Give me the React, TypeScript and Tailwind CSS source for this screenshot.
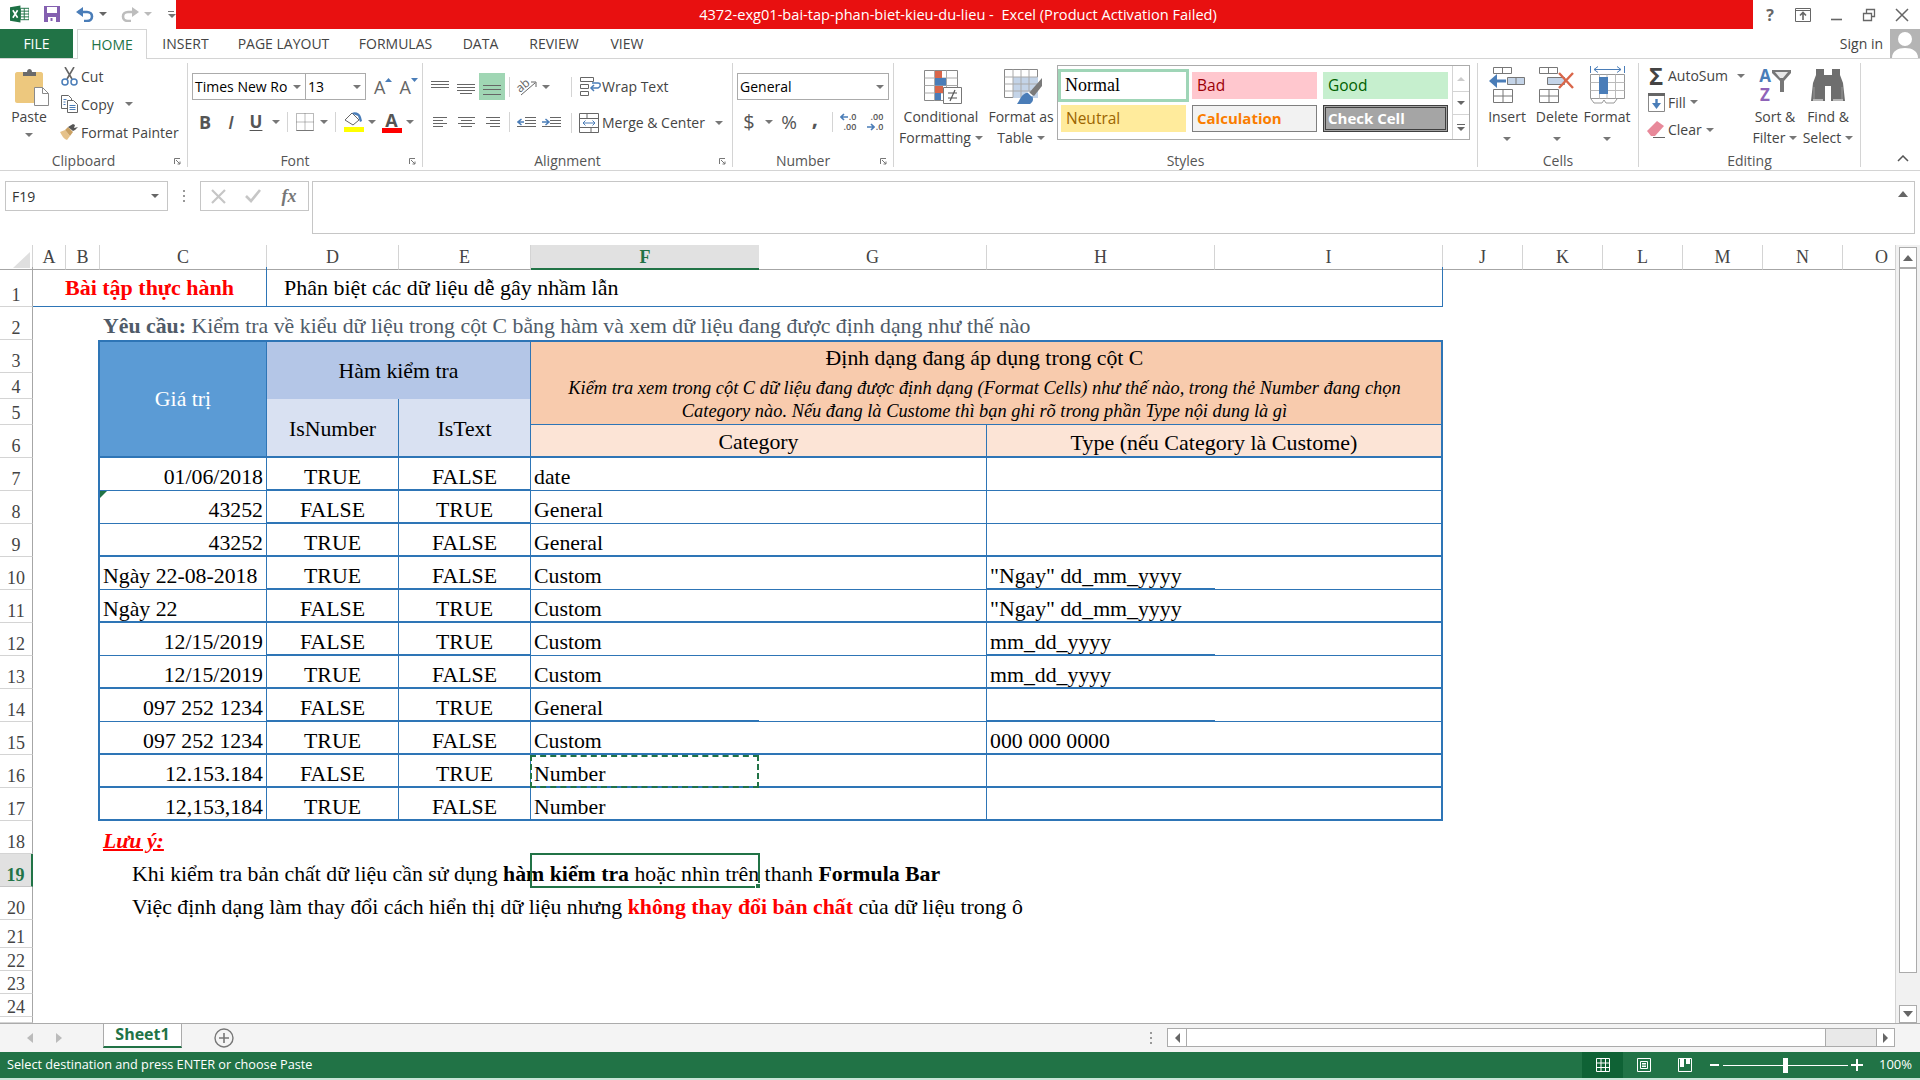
import type { ReactNode } from 'react';

const COLS =
  'grid grid-cols-[33px_33px_34px_167px_132px_132px_228px_228px_228px_228px_80px_80px_80px_80px_80px_52px]';
const BLUE = 'border-[#2e75b6]';
const SERIF = "[font-family:'Liberation_Serif','Times_New_Roman',serif]";

function Caret({ color = '#777' }: { color?: string }) {
  return (
    <svg width="8" height="4" viewBox="0 0 8 4" className="shrink-0">
      <path d="M0 0h8L4 4z" fill={color} />
    </svg>
  );
}

function Sep({ h = 'h-[20px]' }: { h?: string }) {
  return <div className={`w-px ${h} bg-[#d4d4d4]`} />;
}

// horizontal lines used by the alignment and indent buttons
function Lines({ w, h, rows }: { w: number; h: number; rows: number[][] }) {
  return (
    <svg width={w} height={h} viewBox={`0 0 ${w} ${h}`}>
      {rows.map((r, i) => (
        <path key={i} d={`M${r[0]} ${r[2]}.5H${r[1]}`} stroke="#666" />
      ))}
    </svg>
  );
}

function ExcelLogo() {
  return (
    <svg width="20" height="18" viewBox="0 0 20 18">
      <path d="M0 2 11 0v18L0 16z" fill="#1e7145" />
      <path d="M11 3h9v12h-9z" fill="#fff" stroke="#1e7145" />
      <path d="M11 6h9M11 9h9M11 12h9M15 3v12" stroke="#1e7145" />
      <path d="M3 5l5 8M8 5l-5 8" stroke="#fff" strokeWidth="1.7" />
    </svg>
  );
}

function SaveIcon() {
  return (
    <svg width="16" height="16" viewBox="0 0 16 16">
      <path d="M0 0h16v16H0z" fill="#8460b0" />
      <path d="M3 1h10v6H3z" fill="#fff" />
      <path d="M4 11h8v5H4z" fill="#fff" />
      <path d="M6.500 12h2v3h-2z" fill="#8460b0" />
    </svg>
  );
}

function UndoIcon({ color, flip }: { color: string; flip?: boolean }) {
  return (
    <svg width="18" height="15" viewBox="0 0 18 15" className={flip ? '-scale-x-100' : ''}>
      <path d="M2 5h9c3 0 5 2 5 4.500S14 14 11 14H8" fill="none" stroke={color} strokeWidth="2.600" />
      <path d="M7 0v10L0 5z" fill={color} />
    </svg>
  );
}

function WinIcon({ kind }: { kind: string }) {
  const s = '#666';
  return (
    <svg width="16" height="16" viewBox="0 0 16 16" fill="none" stroke={s}>
      {kind === 'display' && (
        <>
          <path d="M.5 1.500h15v13H.5zM.5 3.500h15" />
          <path d="M8 13V6M5 8.500 8 5.500l3 3" strokeWidth="1.600" />
        </>
      )}
      {kind === 'min' && <path d="M3 12.500h11" strokeWidth="1.600" />}
      {kind === 'restore' && <path d="M2.500 6.500h8v7h-8zM5.500 6.500v-4h8v7h-3" strokeWidth="1.300" />}
      {kind === 'close' && <path d="M2 2l12 12M14 2 2 14" strokeWidth="1.500" />}
    </svg>
  );
}

function PasteIcon() {
  return (
    <svg width="34" height="38" viewBox="0 0 34 38">
      <path d="M0 6c0-1 1-2 2-2h24c1 0 2 1 2 2v29H2c-1 0-2-1-2-2z" fill="#edc87e" />
      <path d="M8 4h4c0-4 5-4 5 0h4v4H8z" fill="#6a6a6a" />
      <path d="M19.500 19.500h8l6 6v12h-14z" fill="#fff" stroke="#8a8a8a" />
      <path d="M27.500 19.500v6h6" fill="none" stroke="#8a8a8a" />
    </svg>
  );
}

function CutIcon() {
  return (
    <svg width="17" height="19" viewBox="0 0 17 19" fill="none">
      <path d="M4 0l7 12M13 0 6 12" stroke="#666" strokeWidth="1.600" />
      <circle cx="4" cy="15" r="3" stroke="#4a7db8" strokeWidth="1.500" />
      <circle cx="13" cy="15" r="3" stroke="#4a7db8" strokeWidth="1.500" />
    </svg>
  );
}

function CopyIcon() {
  return (
    <svg width="17" height="18" viewBox="0 0 17 18" fill="none" stroke="#666">
      <path d="M.5.500h7l3 3v10h-10z" fill="#fff" />
      <path d="M6.500 5.500h6l4 4v8h-10z" fill="#fff" />
      <path d="M8.500 10.500h6M8.500 12.500h6M8.500 14.500h6" stroke="#4a7db8" />
      <path d="M2.500 4.500h3M2.500 7h2M2.500 9.500h2" stroke="#4a7db8" />
    </svg>
  );
}

function PainterIcon() {
  return (
    <svg width="18" height="16" viewBox="0 0 18 16">
      <path d="M0 8l5-2 5 6-3 4c-3-1-5-4-7-8z" fill="#e6c28a" />
      <path d="M5 6l3-3 5 5-3 4z" fill="#c9a062" />
      <path d="M8 3l5-3 2 1-1 3 4-1-3 3-2 1z" fill="#555" />
    </svg>
  );
}

function FillIcon() {
  return (
    <div className="flex flex-col items-center gap-[1px]">
      <svg width="19" height="14" viewBox="0 0 19 14" fill="none">
        <path d="M1 8l7-7 7 7-6 5z" fill="#fff" stroke="#666" />
        <path d="M8 1c3-2 8 0 9 4l1 4-2 1-2-6-5-2z" fill="#4a7db8" />
      </svg>
      <div className="w-[20px] h-[5px] bg-[#ffff00]" />
    </div>
  );
}

function OrientIcon() {
  return (
    <svg width="22" height="18" viewBox="0 0 22 18" fill="none" className="overflow-visible">
      <text x="1" y="11" fontSize="12" fill="#666" fontFamily="Open Sans" transform="rotate(-40 8 9)">
        ab
      </text>
      <path d="M5 17 19 5" stroke="#666" />
      <path d="M15 4h5v5" stroke="#666" />
    </svg>
  );
}

function IndentIcon({ right }: { right?: boolean }) {
  return (
    <svg width="19" height="11" viewBox="0 0 19 11" fill="none">
      <path d="M8 .5h11M8 3.500h11M8 6.500h11M0 9.500h19" stroke="#666" />
      {right ? (
        <path d="M0 5h6M3.500 2 7 5 3.500 8" stroke="#4a7db8" strokeWidth="1.500" />
      ) : (
        <path d="M7 5H1M4.500 2 1 5l3.500 3" stroke="#4a7db8" strokeWidth="1.500" />
      )}
    </svg>
  );
}

function WrapIcon() {
  return (
    <svg width="21" height="19" viewBox="0 0 21 19" fill="none">
      <path d="M.5.500h13v4H.5zM.5 7.500h8v4h-8zM.5 14.500h8v4h-8z" stroke="#666" />
      <path d="M11 11h7c3-1 3-5 0-5h-6" stroke="#4a7db8" strokeWidth="1.500" />
      <path d="M14 8l-3 3 3 3" stroke="#4a7db8" strokeWidth="1.500" />
    </svg>
  );
}

function MergeIcon() {
  return (
    <svg width="20" height="20" viewBox="0 0 20 20" fill="none">
      <path d="M.5.500h19v19H.5zM.5 5.500h19M.5 14.500h19M8 .5v5M12 14.500v5" stroke="#666" />
      <path d="M4 10h12M6.500 7.500 4 10l2.500 2.500M13.500 7.500 16 10l-2.500 2.500" stroke="#4a7db8" />
    </svg>
  );
}

function CondIcon() {
  return (
    <svg width="38" height="34" viewBox="0 0 38 34" fill="none" className="mt-[4px] ml-[3px]">
      <path d="M.5.500h33v30H.5z" stroke="#888" />
      <path d="M.5 8h33M.5 15.500h33M.5 23h33M10.500.5v30M22.500.5v30" stroke="#aaa" />
      <path d="M11 1h7v7h-7zM11 16h8v7h-8z" fill="#d9664a" />
      <path d="M11 8h11v7.500H11z" fill="#4a7db8" />
      <path d="M11 23h6v7h-6z" fill="#4a7db8" />
      <path d="M19.500 17.500h18v16h-18z" fill="#fff" stroke="#777" />
      <path d="M24 23h9M24 28h9M31 20l-5 11" stroke="#555" strokeWidth="1.200" />
    </svg>
  );
}

function TableIcon() {
  return (
    <svg width="38" height="35" viewBox="0 0 38 35" fill="none" className="mt-[4px] ml-[4px]">
      <path d="M.5.500h33v28H.5z" stroke="#888" />
      <path d="M9 8h25v21H9z" fill="#c4d4e8" />
      <path d="M.5 8h33M.5 15h33M.5 22h33M9 .5v28M17 .5v28M25 .5v28" stroke="#aaa" />
      <path d="M22 24c-5 2-6 7-9 11h13c3-2 4-5 2-8l-3-3z" fill="#4a7db8" />
      <path d="M25 24 38 9v8l-8 10z" fill="#7a7a7a" />
      <path d="M24 23l4 4" stroke="#fff" strokeWidth="1.500" />
    </svg>
  );
}

function InsertIcon() {
  return (
    <svg width="36" height="36" viewBox="0 0 36 36" fill="none">
      <path d="M4.500.5h18v6h-18zM13.500.5v6M4.500 22.500h19v13h-19zM4.500 29h19M14 22.500v13" stroke="#777" />
      <path d="M18.500 10.500h17v7h-17zM27 10.500v7" fill="#c4d4e8" stroke="#777" />
      <path d="M17 14H3" stroke="#4a7db8" strokeWidth="3" />
      <path d="M8 7 0 14l8 7z" fill="#4a7db8" />
    </svg>
  );
}

function DeleteIcon() {
  return (
    <svg width="36" height="36" viewBox="0 0 36 36" fill="none">
      <path d="M.5.500h18v6H.5zM9.500.5v6M.5 22.500h19v13H.5zM.5 29h19M10 22.500v13" stroke="#777" />
      <path d="M8.500 10.500h17v7h-17z" fill="#c4d4e8" stroke="#777" />
      <path d="M20 6l14 15M34 6 20 21" stroke="#d9664a" strokeWidth="2.400" />
    </svg>
  );
}

function FormatIcon() {
  return (
    <svg width="35" height="39" viewBox="0 0 35 39" fill="none">
      <path d="M.5 1v7M34.500 1v7" stroke="#4a7db8" />
      <path d="M4 4.500h27M8 1.500 4 4.500l4 3M27 1.500l4 3-4 3" stroke="#4a7db8" />
      <path d="M.5 9.500h34v24H.5z" stroke="#999" />
      <path d="M.5 17.500h34M.5 25.500h34M9.500 9.500v24M17 9.500v24M25.500 9.500v24" stroke="#bbb" />
      <path d="M9 12h9v17H9z" fill="#4a7db8" />
      <path d="M1 34l3 4h8l2-3 2 3h8l3-4" stroke="#999" />
    </svg>
  );
}

function FillDownIcon() {
  return (
    <svg width="17" height="19" viewBox="0 0 17 19" fill="none">
      <path d="M.5.500h16v18H.5z" stroke="#888" />
      <path d="M0 0h17v3H0z" fill="#666" />
      <path d="M8.500 6v8" stroke="#4a7db8" strokeWidth="2.400" />
      <path d="M4 10l4.500 6 4.500-6z" fill="#4a7db8" />
    </svg>
  );
}

function EraserIcon() {
  return (
    <svg width="18" height="18" viewBox="0 0 18 18">
      <path d="M0 10 10 0l7 5-9 10H4z" fill="#e8899a" />
      <path d="M6 16h12v1H6z" fill="#666" />
    </svg>
  );
}

function FunnelIcon() {
  return (
    <svg width="19" height="22" viewBox="0 0 19 22">
      <path d="M0 0h19v3l-7 8v11H8V11L0 3z" fill="#777" />
      <path d="M3 2h13l-5 6H8z" fill="#e8e8e8" />
    </svg>
  );
}

function BinocularsIcon() {
  return (
    <svg width="34" height="32" viewBox="0 0 34 32">
      <path d="M5 0h8v6h8V0h8v6l3 8 2 18H20V17h-6v15H0l2-18 3-8z" fill="#6e6e6e" />
      <path d="M2 31h10M22 31h10" stroke="#fff" />
      <path d="M3 18v12M31 18v12" stroke="#999" />
    </svg>
  );
}

function Launcher() {
  return (
    <svg width="7" height="7" viewBox="0 0 7 7" fill="none" stroke="#777" className="absolute right-[6px] bottom-[2px]">
      <path d="M.5 6V.5H6M2 2l4 4M6 3.500V6H3.500" />
    </svg>
  );
}

function Group({ w, label, launcher, children }: { w: string; label: string; launcher?: boolean; children: ReactNode }) {
  return (
    <div className={`${w} h-[104px] shrink-0 flex flex-col border-r border-[#d4d4d4] relative`}>
      <div className="h-[90px] flex">{children}</div>
      <div className={`h-[14px] flex items-center justify-center text-[14px] text-[#555] ${launcher ? 'pr-[20px]' : ''}`}>{label}</div>
      {launcher && <Launcher />}
    </div>
  );
}

function BigButton({ w, icon, one, two, caretOnly }: { w: string; icon: ReactNode; one: string; two?: string; caretOnly?: boolean }) {
  return (
    <div className={`${w} flex flex-col items-center text-[14px] text-[#444]`}>
      <div className="h-[43px] flex items-center justify-center">{icon}</div>
      <div className="h-[21px] leading-[21px] whitespace-nowrap">{one}</div>
      {caretOnly ? (
        <div className="h-[15px] mt-[4px] flex items-center">
          <Caret />
        </div>
      ) : (
        <div className="h-[21px] leading-[21px] flex items-center gap-[4px] whitespace-nowrap">
          {two}
          <Caret />
        </div>
      )}
    </div>
  );
}

function SmallRow({ h, icon, text, caret }: { h: string; icon: ReactNode; text: string; caret?: string }) {
  return (
    <div className={`${h} flex items-center text-[14px] text-[#444] whitespace-nowrap`}>
      <div className="w-[22px] flex justify-center">{icon}</div>
      <span className="ml-[1px]">{text}</span>
      {caret && (
        <span className={caret}>
          <Caret />
        </span>
      )}
    </div>
  );
}

function Cell({ w, children }: { w: string; children?: ReactNode }) {
  return <div className={`${w} h-full flex items-center justify-center shrink-0`}>{children}</div>;
}

function TitleBar() {
  return (
    <div className="h-[29px] flex">
      <div className="w-[176px] flex items-center pl-[10px] pb-[1px]">
        <ExcelLogo />
        <div className="ml-[15px]">
          <SaveIcon />
        </div>
        <div className="ml-[16px]">
          <UndoIcon color="#4a7db8" />
        </div>
        <div className="ml-[5px]">
          <Caret color="#666" />
        </div>
        <div className="ml-[14px]">
          <UndoIcon color="#bdbdbd" flip />
        </div>
        <div className="ml-[5px]">
          <Caret color="#bbb" />
        </div>
        <div className="ml-[16px] flex flex-col gap-[2px]">
          <div className="w-[6px] h-px bg-[#777]" />
          <Caret color="#777" />
        </div>
      </div>
      <div className="flex-1 bg-[#e81010] flex items-center justify-center text-white text-[14.6px] whitespace-pre pr-[13px]">
        4372-exg01-bai-tap-phan-biet-kieu-du-lieu -  Excel (Product Activation Failed)
      </div>
      <div className="w-[167px] flex items-center pl-[9px] gap-[17px] text-[#666]">
        <span className="w-[16px] text-center text-[16px] font-bold">?</span>
        <WinIcon kind="display" />
        <WinIcon kind="min" />
        <WinIcon kind="restore" />
        <WinIcon kind="close" />
      </div>
    </div>
  );
}

const TABS = [
  { name: 'INSERT', w: 'w-[77px]' },
  { name: 'PAGE LAYOUT', w: 'w-[119px]' },
  { name: 'FORMULAS', w: 'w-[105px]' },
  { name: 'DATA', w: 'w-[65px]' },
  { name: 'REVIEW', w: 'w-[82px]' },
  { name: 'VIEW', w: 'w-[64px]' },
];

function TabBar() {
  return (
    <div className="h-[30px] flex border-b border-[#d4d4d4] text-[14px] text-[#444]">
      <div className="w-[73px] bg-[#217346] text-white flex items-center justify-center">FILE</div>
      <div className="ml-[4px] w-[70px] h-[30px] bg-white border border-b-0 border-[#d4d4d4] text-[#217346] flex items-center justify-center">
        HOME
      </div>
      {TABS.map((t) => (
        <div key={t.name} className={`${t.w} flex items-center justify-center`}>
          {t.name}
        </div>
      ))}
      <div className="flex-1 flex items-center justify-end">
        <span className="mr-[7px]">Sign in</span>
        <div className="w-[30px] h-[29px] bg-[#b4b4b4] overflow-hidden">
          <svg width="30" height="29" viewBox="0 0 30 29" fill="#fff">
            <circle cx="15" cy="10" r="7" />
            <path d="M2 29c0-7 6-10 13-10s13 3 13 10z" />
          </svg>
        </div>
      </div>
    </div>
  );
}

function Combo({ w, text, extra }: { w: string; text: string; extra?: string }) {
  return (
    <div className={`${w} h-[27px] border border-[#ababab] flex items-center justify-between pl-[2px] pr-[4px] text-[14px] text-black whitespace-nowrap ${extra ?? ''}`}>
      <span>{text}</span>
      <Caret />
    </div>
  );
}

function Ribbon() {
  return (
    <div className="h-[112px] pt-[4px] flex border-b border-[#d4d4d4]">
      {/* Clipboard */}
      <Group w="w-[188px]" label="Clipboard" launcher>
        <div className="w-[58px] flex flex-col items-center text-[14px] text-[#444]">
          <div className="h-[43px] pl-[6px] flex items-end">
            <PasteIcon />
          </div>
          <div className="h-[21px] leading-[21px]">Paste</div>
          <div className="mt-[6px]">
            <Caret />
          </div>
        </div>
        <div className="flex flex-col">
          <SmallRow h="h-[27px]" icon={<CutIcon />} text="Cut" />
          <SmallRow h="h-[28px]" icon={<CopyIcon />} text="Copy" caret="ml-[11px]" />
          <SmallRow h="h-[28px]" icon={<PainterIcon />} text="Format Painter" />
        </div>
      </Group>

      {/* Font */}
      <Group w="w-[235px]" label="Font" launcher>
        <div className="pl-[4px] pt-[10px] flex flex-col gap-[8px]">
          <div className="flex items-center">
            <Combo w="w-[114px]" text="Times New Ro" />
            <Combo w="w-[61px]" text="13" extra="-ml-px" />
            <div className="ml-[8px] flex items-start text-[18px] leading-[22px] text-[#666]">
              A
              <svg width="7" height="4" viewBox="0 0 7 4" className="mt-[2px]">
                <path d="M0 4h7L3.500 0z" fill="#4a7db8" />
              </svg>
            </div>
            <div className="ml-[7px] flex items-start text-[18px] leading-[22px] text-[#666]">
              A
              <svg width="7" height="4" viewBox="0 0 7 4" className="mt-[2px]">
                <path d="M0 0h7L3.500 4z" fill="#4a7db8" />
              </svg>
            </div>
          </div>
          <div className="h-[28px] flex items-center text-[#555]">
            <Cell w="w-[26px]"><b className="text-[18px]">B</b></Cell>
            <Cell w="w-[26px]"><i className="text-[18px] font-semibold">I</i></Cell>
            <Cell w="w-[24px]"><b className="text-[17px] underline underline-offset-2">U</b></Cell>
            <Cell w="w-[16px]"><Caret /></Cell>
            <Cell w="w-[6px]"><Sep /></Cell>
            <Cell w="w-[29px]">
              <svg width="18" height="18" viewBox="0 0 18 18" fill="none" stroke="#777">
                <path d="M.5.500h17v17H.5zM.5 9h17M9 .5v17" strokeDasharray="1 1" />
                <path d="M.5 17.500h17" />
              </svg>
            </Cell>
            <Cell w="w-[10px]"><Caret /></Cell>
            <Cell w="w-[13px]"><Sep /></Cell>
            <Cell w="w-[23px]"><FillIcon /></Cell>
            <Cell w="w-[14px]"><Caret /></Cell>
            <Cell w="w-[25px]">
              <div className="flex flex-col items-center">
                <b className="text-[18px] leading-[16px] text-[#555]">A</b>
                <div className="w-[20px] h-[5px] bg-[#ff0000]" />
              </div>
            </Cell>
            <Cell w="w-[12px]"><Caret /></Cell>
          </div>
        </div>
      </Group>

      {/* Alignment */}
      <Group w="w-[310px]" label="Alignment" launcher>
        <div className="pl-[4px] pt-[10px] w-[148px] flex flex-col gap-[8px]">
          <div className="h-[27px] flex items-center">
            <Cell w="w-[26px]"><Lines w={18} h={20} rows={[[0, 18, 4], [0, 18, 7], [0, 18, 10]]} /></Cell>
            <Cell w="w-[26px]"><Lines w={18} h={20} rows={[[0, 18, 7], [0, 18, 10], [0, 18, 13], [3, 15, 16]]} /></Cell>
            <Cell w="w-[26px]">
              <div className="w-[26px] h-[27px] bg-[#a0d6b4] flex items-center justify-center pt-[6px]">
                <Lines w={18} h={12} rows={[[0, 18, 1], [0, 18, 5], [0, 18, 10]]} />
              </div>
            </Cell>
            <Cell w="w-[8px]"><Sep /></Cell>
            <Cell w="w-[28px]"><OrientIcon /></Cell>
            <Cell w="w-[10px]"><Caret /></Cell>
          </div>
          <div className="h-[28px] flex items-center">
            <Cell w="w-[26px]"><Lines w={15} h={11} rows={[[0, 14, 0], [0, 10, 3], [0, 14, 6], [0, 10, 9]]} /></Cell>
            <Cell w="w-[26px]"><Lines w={17} h={11} rows={[[0, 17, 0], [3, 14, 3], [0, 17, 6], [3, 14, 9]]} /></Cell>
            <Cell w="w-[26px]"><Lines w={15} h={11} rows={[[1, 15, 0], [5, 15, 3], [1, 15, 6], [5, 15, 9]]} /></Cell>
            <Cell w="w-[8px]"><Sep /></Cell>
            <Cell w="w-[26px]"><IndentIcon /></Cell>
            <Cell w="w-[25px]"><IndentIcon right /></Cell>
          </div>
        </div>
        <div className="pt-[10px] flex flex-col gap-[8px] text-[14px] text-[#444]">
          <div className="h-[27px] flex items-center whitespace-nowrap">
            <Sep />
            <div className="ml-[8px]"><WrapIcon /></div>
            <span className="ml-[1px]">Wrap Text</span>
          </div>
          <div className="h-[28px] flex items-center whitespace-nowrap pt-[1px]">
            <Sep />
            <div className="ml-[7px]"><MergeIcon /></div>
            <span className="ml-[3px]">Merge &amp; Center</span>
            <span className="ml-[10px]"><Caret /></span>
          </div>
        </div>
      </Group>

      {/* Number */}
      <Group w="w-[161px]" label="Number" launcher>
        <div className="pl-[4px] pt-[10px] flex flex-col gap-[8px]">
          <Combo w="w-[152px]" text="General" />
          <div className="h-[28px] flex items-center text-[#555]">
            <Cell w="w-[24px]"><span className="text-[20px]">$</span></Cell>
            <Cell w="w-[16px]"><Caret /></Cell>
            <Cell w="w-[24px]"><span className="text-[19px]">%</span></Cell>
            <Cell w="w-[28px]"><b className="text-[22px] leading-[10px] -translate-y-[5px]">,</b></Cell>
            <Cell w="w-[6px]"><Sep /></Cell>
            <Cell w="w-[26px]">
              <div className="flex flex-col items-end text-[9px] leading-[10px] font-semibold">
                <div className="flex items-center gap-[1px]">
                  <svg width="8" height="8" viewBox="0 0 8 8"><path d="M8 4H2M4 1 1 4l3 3" stroke="#4a7db8" strokeWidth="1.600" fill="none" /></svg>
                  .0
                </div>
                <span>.00</span>
              </div>
            </Cell>
            <Cell w="w-[28px]">
              <div className="flex flex-col items-end text-[9px] leading-[10px] font-semibold">
                <span>.00</span>
                <div className="flex items-center gap-[1px]">
                  <svg width="8" height="8" viewBox="0 0 8 8"><path d="M0 4h6M4 1l3 3-3 3" stroke="#4a7db8" strokeWidth="1.600" fill="none" /></svg>
                  .0
                </div>
              </div>
            </Cell>
          </div>
        </div>
      </Group>

      {/* Styles */}
      <Group w="w-[584px]" label="Styles">
        <div className="ml-[3px]">
          <BigButton w="w-[88px]" icon={<CondIcon />} one="Conditional" two="Formatting" />
        </div>
        <BigButton w="w-[72px]" icon={<TableIcon />} one="Format as" two="Table" />
        <div className="mt-[2px] w-[413px] h-[75px] border border-[#ababab] flex">
          <div className="w-[394px] pl-[3px] pt-[6px] flex flex-col gap-[6px]">
            <div className="flex gap-[6px]">
              <div className={`w-[125px] h-[27px] pl-[4px] flex items-center bg-white outline-[3px] outline-[#9fd5b7] text-[18px] text-black ${SERIF}`}>
                Normal
              </div>
              <div className="w-[125px] h-[27px] pl-[5px] flex items-center bg-[#ffc7ce] text-[15.500px] text-[#9c0006]">Bad</div>
              <div className="w-[125px] h-[27px] pl-[5px] flex items-center bg-[#c6efce] text-[15.500px] text-[#006100]">Good</div>
            </div>
            <div className="flex gap-[6px]">
              <div className="w-[125px] h-[27px] pl-[5px] flex items-center bg-[#ffeb9c] text-[15.500px] text-[#9c6500]">Neutral</div>
              <div className="w-[125px] h-[27px] pl-[4px] flex items-center bg-[#f2f2f2] border border-[#7f7f7f] text-[15px] font-bold text-[#fa7d00]">Calculation</div>
              <div className="w-[125px] h-[27px] pl-[2px] flex items-center bg-[#a5a5a5] border-[3px] border-double border-[#3f3f3f] text-[15px] font-bold text-white">Check Cell</div>
            </div>
          </div>
          <div className="flex-1 flex flex-col border-l border-[#d4d4d4]">
            <div className="h-[26px] flex items-center justify-center border-b border-[#d4d4d4]">
              <svg width="8" height="4" viewBox="0 0 8 4"><path d="M0 4h8L4 0z" fill="#ccc" /></svg>
            </div>
            <div className="h-[23px] flex items-center justify-center border-b border-[#d4d4d4]">
              <Caret color="#666" />
            </div>
            <div className="flex-1 flex flex-col items-center justify-center gap-[2px]">
              <div className="w-[8px] h-px bg-[#666]" />
              <Caret color="#666" />
            </div>
          </div>
        </div>
      </Group>

      {/* Cells */}
      <Group w="w-[161px]" label="Cells">
        <div className="pl-[4px] flex">
          <BigButton w="w-[50px]" icon={<InsertIcon />} one="Insert" caretOnly />
          <BigButton w="w-[50px]" icon={<DeleteIcon />} one="Delete" caretOnly />
          <BigButton w="w-[50px]" icon={<FormatIcon />} one="Format" caretOnly />
        </div>
      </Group>

      {/* Editing */}
      <Group w="w-[222px]" label="Editing">
        <div className="w-[108px] pl-[6px] flex flex-col">
          <SmallRow h="h-[25px]" icon={<span className="text-[24px] leading-[24px] font-bold text-[#444]">Σ</span>} text="AutoSum" caret="ml-[9px]" />
          <SmallRow h="h-[28px]" icon={<FillDownIcon />} text="Fill" caret="ml-[4px]" />
          <SmallRow h="h-[27px]" icon={<EraserIcon />} text="Clear" caret="ml-[4px]" />
        </div>
        <BigButton
          w="w-[56px]"
          icon={
            <div className="flex items-start gap-[1px]">
              <div className="flex flex-col items-center font-bold text-[17px] leading-[19px]">
                <span className="text-[#4a7db8]">A</span>
                <span className="text-[#8f63b8]">Z</span>
              </div>
              <div className="mt-[4px]">
                <FunnelIcon />
              </div>
            </div>
          }
          one="Sort &"
          two="Filter"
        />
        <BigButton w="w-[50px]" icon={<BinocularsIcon />} one="Find &" two="Select" />
      </Group>

      <div className="flex-1 flex items-end justify-end pr-[11px] pb-[8px]">
        <svg width="12" height="7" viewBox="0 0 12 7" fill="none">
          <path d="M1 6l5-5 5 5" stroke="#555" strokeWidth="1.500" />
        </svg>
      </div>
    </div>
  );
}

function FormulaBar() {
  return (
    <div className="h-[74px] flex pt-[10px] pl-[5px] pr-[5px]">
      <div className="w-[163px] h-[30px] border border-[#c6c6c6] flex items-center justify-between pl-[6px] pr-[8px] text-[14px] text-[#333]">
        F19
        <Caret color="#666" />
      </div>
      <div className="w-[32px] h-[30px] flex flex-col items-center justify-center gap-[3px]">
        <div className="w-[2px] h-[2px] bg-[#999]" />
        <div className="w-[2px] h-[2px] bg-[#999]" />
        <div className="w-[2px] h-[2px] bg-[#999]" />
      </div>
      <div className="w-[109px] h-[30px] border border-[#c6c6c6] flex items-center">
        <div className="w-[34px] flex justify-center">
          <svg width="15" height="15" viewBox="0 0 15 15" fill="none">
            <path d="M1 1l13 13M14 1 1 14" stroke="#c6c6c6" strokeWidth="2.200" />
          </svg>
        </div>
        <div className="w-[36px] flex justify-center">
          <svg width="16" height="14" viewBox="0 0 16 14" fill="none">
            <path d="M1 7l5 5 9-11" stroke="#c6c6c6" strokeWidth="2.600" />
          </svg>
        </div>
        <div className={`w-[36px] text-center italic font-bold text-[18px] text-[#777] ${SERIF}`}>fx</div>
      </div>
      <div className="ml-[3px] flex-1 h-[53px] border border-[#c6c6c6] flex justify-end pt-[9px] pr-[6px]">
        <svg width="10" height="6" viewBox="0 0 10 6">
          <path d="M0 6l5-6 5 6z" fill="#666" />
        </svg>
      </div>
    </div>
  );
}

function RowHead({
  n,
  active,
  className = 'row-start-1',
  lead = 'leading-[22px]',
}: {
  n?: number;
  active?: boolean;
  className?: string;
  lead?: string;
}) {
  return (
    <div
      className={`col-start-1 ${className} ${lead} flex items-end justify-center border-b text-[18px] overflow-hidden ${SERIF} ${
        active
          ? 'bg-[#e1e1e1] text-[#217346] font-bold border-r-2 border-r-[#217346] border-b-[#c6c6c6]'
          : 'text-[#444] border-r border-r-[#a6a6a6] border-b-[#d4d4d4]'
      }`}
    >
      {n}
    </div>
  );
}

const COL_HEADS = [
  { l: 'A', c: 'border-r' },
  { l: 'B', c: 'border-r' },
  { l: 'C', c: 'border-r' },
  { l: 'D', c: 'border-r' },
  { l: 'E', c: 'border-r' },
  { l: 'F', c: 'bg-[#e1e1e1] text-[#217346] font-bold' },
  { l: 'G', c: 'border-r' },
  { l: 'H', c: 'border-r' },
  { l: 'I', c: 'border-r' },
  { l: 'J', c: 'border-r' },
  { l: 'K', c: 'border-r' },
  { l: 'L', c: 'border-r' },
  { l: 'M', c: 'border-r' },
  { l: 'N', c: 'border-r' },
  { l: 'O', c: 'text-left pl-[32px]' },
];

function ColumnHeaders() {
  return (
    <div className={`${COLS} h-[22px] text-[18px] leading-[22px] text-[#444] ${SERIF}`}>
      <div className="border-r border-b border-r-[#d4d4d4] border-b-[#a6a6a6] flex justify-end items-end pr-[2px] pb-px">
        <svg width="17" height="16" viewBox="0 0 17 16">
          <path d="M17 0v16H0z" fill="#dfdfdf" />
        </svg>
      </div>
      {COL_HEADS.map((c) => (
        <div
          key={c.l}
          className={`text-center pt-px border-[#d4d4d4] ${c.c} ${c.l === 'F' ? 'border-b-2 border-b-[#217346]' : 'border-b border-b-[#a6a6a6]'}`}
        >
          {c.l}
        </div>
      ))}
    </div>
  );
}

function HeaderBlock() {
  const c = `flex items-center justify-center text-[21.800px] ${BLUE}`;
  return (
    <div className={`${COLS} grid-rows-[33px_26px_26px_33px] ${SERIF}`}>
      <RowHead n={3} className="row-start-1" />
      <RowHead n={4} className="row-start-2" />
      <RowHead n={5} className="row-start-3" />
      <RowHead n={6} className="row-start-4" />
      <div className={`col-start-4 row-start-1 row-span-4 -ml-[2px] pt-[1px] bg-[#5b9bd5] text-white border-l-2 border-t-2 border-b-2 border-r ${c}`}>Giá trị</div>
      <div className={`col-start-5 col-span-2 row-start-1 row-span-2 pt-[1px] bg-[#b4c6e7] text-black border-t-2 border-r ${c}`}>Hàm kiểm tra</div>
      <div className={`col-start-5 row-start-3 row-span-2 pt-[3px] bg-[#d9e1f2] text-black border-b-2 border-r ${c}`}>IsNumber</div>
      <div className={`col-start-6 row-start-3 row-span-2 pt-[3px] bg-[#d9e1f2] text-black border-b-2 border-r ${c}`}>IsText</div>
      <div className={`col-start-7 col-span-4 row-start-1 row-span-3 pr-[3px] bg-[#f8cbad] text-black border-t-2 border-r-2 border-b flex flex-col items-center whitespace-nowrap ${BLUE}`}>
        <div className="h-[32px] text-[21.800px] leading-[32px]">Định dạng đang áp dụng trong cột C</div>
        <div className="text-[18.400px] leading-[24px] italic pt-[2px]">
          Kiểm tra xem trong cột C dữ liệu đang được định dạng (Format Cells) như thế nào, trong thẻ Number đang chọn
        </div>
        <div className="text-[18.400px] leading-[24px] italic -mt-px">
          Category nào. Nếu đang là Custome thì bạn ghi rõ trong phần Type nội dung là gì
        </div>
      </div>
      <div className={`col-start-7 col-span-2 row-start-4 pt-[3px] bg-[#fce4d6] text-black border-b-2 border-r ${c}`}>Category</div>
      <div className={`col-start-9 col-span-2 row-start-4 pt-[3px] bg-[#fce4d6] text-black border-b-2 border-r-2 ${c} text-[22px]`}>Type (nếu Category là Custome)</div>
    </div>
  );
}

type DataRow = {
  n: number;
  c: string;
  left?: boolean;
  d: string;
  e: string;
  f: string;
  h?: string;
  thick?: boolean;
  heavyF?: boolean;
  heavyH?: boolean;
  triangle?: boolean;
  ants?: boolean;
};

const ROWS: DataRow[] = [
  { n: 7, c: '01/06/2018', d: 'TRUE', e: 'FALSE', f: 'date' },
  { n: 8, c: '43252', d: 'FALSE', e: 'TRUE', f: 'General', triangle: true },
  { n: 9, c: '43252', d: 'TRUE', e: 'FALSE', f: 'General', thick: true },
  { n: 10, c: 'Ngày 22-08-2018', left: true, d: 'TRUE', e: 'FALSE', f: 'Custom', h: '"Ngay" dd_mm_yyyy', heavyH: true },
  { n: 11, c: 'Ngày 22', left: true, d: 'FALSE', e: 'TRUE', f: 'Custom', h: '"Ngay" dd_mm_yyyy', thick: true },
  { n: 12, c: '12/15/2019', d: 'FALSE', e: 'TRUE', f: 'Custom', h: 'mm_dd_yyyy', heavyH: true },
  { n: 13, c: '12/15/2019', d: 'TRUE', e: 'FALSE', f: 'Custom', h: 'mm_dd_yyyy', thick: true },
  { n: 14, c: '097 252 1234', d: 'FALSE', e: 'TRUE', f: 'General', heavyF: true, heavyH: true },
  { n: 15, c: '097 252 1234', d: 'TRUE', e: 'FALSE', f: 'Custom', h: '000 000 0000', thick: true },
  { n: 16, c: '12.153.184', d: 'FALSE', e: 'TRUE', f: 'Number', thick: true, ants: true },
  { n: 17, c: '12,153,184', d: 'TRUE', e: 'FALSE', f: 'Number', thick: true },
];

function Row({ r }: { r: DataRow }) {
  const base = `row-start-1 flex items-end whitespace-nowrap ${BLUE}`;
  const line = r.thick ? 'border-b-2 leading-[24px]' : 'border-b leading-[26px]';
  const heavy = 'border-b-2 leading-[24px]';
  return (
    <div className={`${COLS} h-[33px] text-[21.800px] text-black ${SERIF}`}>
      <RowHead n={r.n} />
      <div className={`col-start-4 relative -ml-[2px] border-l-2 border-r ${line} ${base} ${r.left ? 'justify-start pl-[3px]' : 'justify-end pr-[3px]'}`}>
        {r.c}
        {r.triangle && (
          <svg width="7" height="7" viewBox="0 0 7 7" className="absolute left-0 top-0">
            <path d="M0 0h7L0 7z" fill="#217346" />
          </svg>
        )}
      </div>
      <div className={`col-start-5 justify-center border-r ${heavy} ${base}`}>{r.d}</div>
      <div className={`col-start-6 justify-center border-r ${heavy} ${base}`}>{r.e}</div>
      <div className={`col-start-7 pl-[3px] ${r.heavyF ? heavy : line} ${base}`}>{r.f}</div>
      <div className={`col-start-8 border-r ${line} ${base}`} />
      <div className={`col-start-9 pl-[3px] ${r.heavyH ? heavy : line} ${base}`}>{r.h}</div>
      <div className={`col-start-10 border-r-2 ${line} ${base}`} />
      {r.ants && <div className="col-start-7 row-start-1 -ml-px border-2 border-dashed border-[#217346]" />}
    </div>
  );
}

function Sheet() {
  return (
    <div className="flex-1 flex min-h-0">
      <div className="w-[1895px] flex flex-col overflow-hidden">
        <ColumnHeaders />

        <div className={`${COLS} h-[40px] text-[22px] ${SERIF}`}>
          <RowHead n={1} />
          <div className={`col-start-2 col-span-3 pt-[2px] flex items-center justify-center font-bold text-[#ff0000] border-r border-b ${BLUE}`}>
            Bài tập thực hành
          </div>
          <div className={`col-start-5 col-span-6 pt-[2px] flex items-center pl-[17px] text-black border-r border-b ${BLUE}`}>
            Phân biệt các dữ liệu dễ gây nhầm lẫn
          </div>
        </div>

        <div className={`${COLS} h-[33px] text-[21.800px] ${SERIF}`}>
          <RowHead n={2} />
          <div className="col-start-2 col-span-15 pl-[70px] pb-px flex items-end leading-[26px] text-[#4f5b68] whitespace-pre">
            <b>Yêu cầu:</b> Kiểm tra về kiểu dữ liệu trong cột C bằng hàm và xem dữ liệu đang được định dạng như thế nào
          </div>
        </div>

        <HeaderBlock />

        {ROWS.map((r) => (
          <Row key={r.n} r={r} />
        ))}

        <div className={`${COLS} h-[33px] text-[21.800px] ${SERIF}`}>
          <RowHead n={18} />
          <div className="col-start-2 col-span-15 pl-[70px] flex items-end leading-[26px]">
            <b className="italic text-[#ff0000] underline decoration-2">Lưu ý:</b>
          </div>
        </div>

        <div className={`${COLS} h-[33px] text-[21.800px] text-black ${SERIF}`}>
          <RowHead n={19} active />
          <div className="col-start-2 col-span-15 row-start-1 pl-[99px] flex items-end leading-[26px] whitespace-pre">
            <span>
              Khi kiểm tra bản chất dữ liệu cần sử dụng <b>hàm kiểm tra</b> hoặc nhìn trên thanh <b>Formula Bar</b>
            </span>
          </div>
          <div className="col-start-7 row-start-1 relative -my-px -mx-px border-2 border-[#217346]">
            <div className="absolute -right-[3px] -bottom-[3px] w-[6px] h-[6px] bg-[#217346] border border-white" />
          </div>
        </div>

        <div className={`${COLS} h-[33px] text-[21.800px] text-black ${SERIF}`}>
          <RowHead n={20} />
          <div className="col-start-2 col-span-15 pl-[99px] flex items-end leading-[26px] whitespace-pre">
            <span>
              Việc định dạng làm thay đổi cách hiển thị dữ liệu nhưng <b className="text-[#ff0000]">không thay đổi bản chất</b> của dữ liệu trong ô
            </span>
          </div>
        </div>

        <div className={`${COLS} h-[28px]`}><RowHead n={21} lead="leading-[20px]" /></div>
        <div className={`${COLS} h-[23px]`}><RowHead n={22} lead="leading-[18px]" /></div>
        <div className={`${COLS} h-[23px]`}><RowHead n={23} lead="leading-[18px]" /></div>
        <div className={`${COLS} h-[23px]`}><RowHead n={24} lead="leading-[18px]" /></div>
        <div className={`${COLS} h-[6px]`}><RowHead /></div>
      </div>

      {/* vertical scrollbar */}
      <div className="w-[25px] pt-[2px] pl-[3px] pr-[3px] flex flex-col bg-[#f1f1f1] border-l border-[#d4d4d4]">
        <div className="h-[21px] shrink-0 bg-white border border-[#ababab] flex items-center justify-center">
          <svg width="10" height="6" viewBox="0 0 10 6"><path d="M0 6h10L5 0z" fill="#666" /></svg>
        </div>
        <div className="h-[705px] shrink-0 bg-white border border-[#ababab]" />
        <div className="flex-1" />
        <div className="h-[18px] shrink-0 bg-white border border-[#ababab] flex items-center justify-center">
          <svg width="10" height="6" viewBox="0 0 10 6"><path d="M0 0h10L5 6z" fill="#666" /></svg>
        </div>
      </div>
    </div>
  );
}

function SheetTabs() {
  return (
    <div className="h-[29px] bg-[#f4f4f4] border-t border-[#ababab] flex">
      <div className="w-[103px] flex items-center pl-[27px] gap-[23px]">
        <svg width="6" height="10" viewBox="0 0 6 10"><path d="M6 0v10L0 5z" fill="#bbb" /></svg>
        <svg width="6" height="10" viewBox="0 0 6 10"><path d="M0 0v10l6-5z" fill="#bbb" /></svg>
      </div>
      <div className="w-[79px] h-[24px] pb-[3px] bg-white border-x border-b-2 border-x-[#ababab] border-b-[#217346] flex items-center justify-center text-[16px] font-bold text-[#217346]">
        Sheet1
      </div>
      <div className="ml-[32px] w-[20px] h-[28px] flex items-center">
        <svg width="20" height="20" viewBox="0 0 20 20" fill="none" stroke="#777">
          <circle cx="10" cy="10" r="9" strokeWidth="1.400" />
          <path d="M10 5v10M5 10h10" strokeWidth="1.600" />
        </svg>
      </div>
      <div className="flex-1 flex justify-end items-start pt-[4px] pr-[25px]">
        <div className="h-[19px] flex flex-col justify-center gap-[3px] mr-[15px]">
          <div className="w-[2px] h-[2px] bg-[#999]" />
          <div className="w-[2px] h-[2px] bg-[#999]" />
          <div className="w-[2px] h-[2px] bg-[#999]" />
        </div>
        <div className="w-[728px] h-[19px] border border-[#ababab] flex bg-[#e9e9e9]">
          <div className="w-[18px] bg-white flex items-center justify-center">
            <svg width="5" height="10" viewBox="0 0 5 10"><path d="M5 0v10L0 5z" fill="#666" /></svg>
          </div>
          <div className="w-[640px] bg-white border-x border-[#ababab]" />
          <div className="flex-1" />
          <div className="w-[18px] bg-white border-l border-[#ababab] flex items-center justify-center">
            <svg width="5" height="10" viewBox="0 0 5 10"><path d="M0 0v10l5-5z" fill="#666" /></svg>
          </div>
        </div>
      </div>
    </div>
  );
}

function StatusBar() {
  return (
    <div className="h-[26px] bg-[#217346] flex items-center text-white text-[12.700px]">
      <div className="flex-1 pl-[7px] whitespace-nowrap">Select destination and press ENTER or choose Paste</div>
      <div className="w-[41px] h-full bg-[#0f6235] flex items-center justify-center">
        <svg width="14" height="14" viewBox="0 0 14 14" fill="none" stroke="#fff">
          <path d="M.5.500h13v13H.5zM.5 5h13M.5 9.500h13M5 .5v13M9.500.5v13" />
        </svg>
      </div>
      <div className="w-[41px] flex justify-center">
        <svg width="14" height="14" viewBox="0 0 14 14" fill="none" stroke="#fff">
          <path d="M.5.500h13v13H.5zM3.500 3.500h7v7h-7zM5 5.500h4M5 7h4M5 8.500h4" />
        </svg>
      </div>
      <div className="w-[41px] flex justify-center">
        <svg width="14" height="14" viewBox="0 0 14 14" fill="none" stroke="#fff">
          <path d="M.5.500h13v13H.5z" />
          <path d="M2 0h4v9H2zM8 0h4v6H8z" fill="#fff" stroke="none" />
        </svg>
      </div>
      <div className="ml-[5px] w-[9px] h-[2px] bg-white" />
      <div className="ml-[4px] w-[125px] h-px bg-white relative">
        <div className="absolute left-[60px] -top-[7px] w-[5px] h-[15px] bg-white" />
      </div>
      <svg width="12" height="12" viewBox="0 0 12 12" className="ml-[3px]">
        <path d="M5 0h2v12H5zM0 5h12v2H0z" fill="#fff" />
      </svg>
      <div className="w-[57px] pl-[16px] text-[13px]">100%</div>
    </div>
  );
}

export default function App() {
  return (
    <div className="w-[1920px] h-[1080px] flex flex-col overflow-hidden bg-white [font-family:'Open_Sans',sans-serif]">
      <TitleBar />
      <TabBar />
      <Ribbon />
      <FormulaBar />
      <Sheet />
      <SheetTabs />
      <StatusBar />
      <div className="h-[2px] bg-[#c8e6d8]" />
    </div>
  );
}
